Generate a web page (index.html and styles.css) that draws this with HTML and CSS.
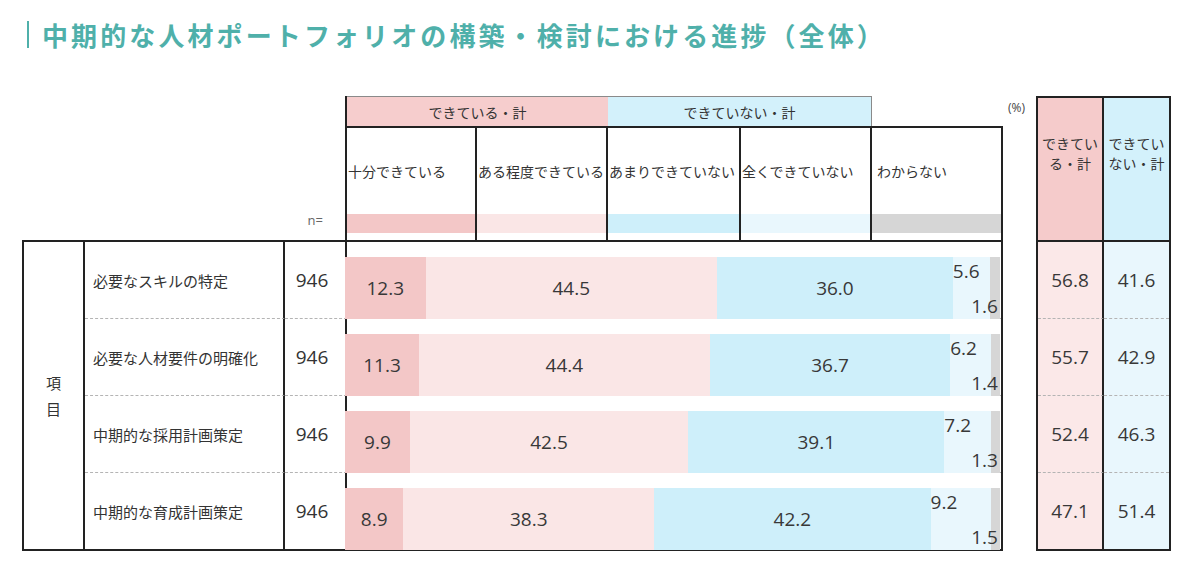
FILE: index.html
```html
<!DOCTYPE html>
<html lang="ja">
<head>
<meta charset="utf-8">
<title>中期的な人材ポートフォリオの構築・検討における進捗（全体）</title>
<link rel="stylesheet" href="styles.css">
</head>
<body>
<div class="page">
  <h1 class="title"><span class="title-bar"></span><span class="title-text">中期的な人材ポートフォリオの構築・検討における進捗（全体）</span></h1>
  <div class="chart">
    <div class="main">
      <div class="head">
        <div class="head-left"><span class="n-label">n=</span></div>
        <div class="head-box">
          <div class="bands">
            <div class="band band-pos">できている・計</div>
            <div class="band band-neg">できていない・計</div>
          </div>
          <div class="cols">
            <div class="col c1"><div class="col-text">十分できている</div><div class="strip k1"></div></div>
            <div class="col c2"><div class="col-text">ある程度できている</div><div class="strip k2"></div></div>
            <div class="col c3"><div class="col-text">あまりできていない</div><div class="strip k3"></div></div>
            <div class="col c4"><div class="col-text">全くできていない</div><div class="strip k4"></div></div>
            <div class="col c5"><div class="col-text col-text-last">わからない</div><div class="strip k5"></div></div>
          </div>
        </div>
      </div>
      <div class="body">
        <div class="item">項<br>目</div>

        <div class="label sep">必要なスキルの特定</div>
        <div class="n sep">946</div>
        <div class="bar-cell sep">
          <div class="bar">
            <div class="seg k1" style="width:12.3%">12.3</div>
            <div class="seg k2" style="width:44.5%">44.5</div>
            <div class="seg k3" style="width:36.0%">36.0</div>
            <div class="seg k4" style="width:5.6%"><span class="lbl-top">5.6</span></div>
            <div class="seg k5" style="width:1.6%"><span class="lbl-bot">1.6</span></div>
          </div>
        </div>

        <div class="label sep">必要な人材要件の明確化</div>
        <div class="n sep">946</div>
        <div class="bar-cell sep">
          <div class="bar">
            <div class="seg k1" style="width:11.3%">11.3</div>
            <div class="seg k2" style="width:44.4%">44.4</div>
            <div class="seg k3" style="width:36.7%">36.7</div>
            <div class="seg k4" style="width:6.2%"><span class="lbl-top">6.2</span></div>
            <div class="seg k5" style="width:1.4%"><span class="lbl-bot">1.4</span></div>
          </div>
        </div>

        <div class="label sep">中期的な採用計画策定</div>
        <div class="n sep">946</div>
        <div class="bar-cell sep">
          <div class="bar">
            <div class="seg k1" style="width:9.9%">9.9</div>
            <div class="seg k2" style="width:42.5%">42.5</div>
            <div class="seg k3" style="width:39.1%">39.1</div>
            <div class="seg k4" style="width:7.2%"><span class="lbl-top">7.2</span></div>
            <div class="seg k5" style="width:1.3%"><span class="lbl-bot">1.3</span></div>
          </div>
        </div>

        <div class="label">中期的な育成計画策定</div>
        <div class="n">946</div>
        <div class="bar-cell">
          <div class="bar">
            <div class="seg k1" style="width:8.9%">8.9</div>
            <div class="seg k2" style="width:38.3%">38.3</div>
            <div class="seg k3" style="width:42.2%">42.2</div>
            <div class="seg k4" style="width:9.2%"><span class="lbl-top">9.2</span></div>
            <div class="seg k5" style="width:1.4%"><span class="lbl-bot">1.5</span></div>
          </div>
        </div>
      </div>
    </div>

    <div class="gap"><span class="pct">(%)</span></div>

    <div class="side">
      <div class="side-head side-pos">できてい<br>る・計</div>
      <div class="side-head side-neg">できてい<br>ない・計</div>

      <div class="side-val val-pos sep">56.8</div>
      <div class="side-val val-neg sep">41.6</div>

      <div class="side-val val-pos sep">55.7</div>
      <div class="side-val val-neg sep">42.9</div>

      <div class="side-val val-pos sep">52.4</div>
      <div class="side-val val-neg sep">46.3</div>

      <div class="side-val val-pos">47.1</div>
      <div class="side-val val-neg">51.4</div>
    </div>
  </div>
</div>
</body>
</html>
```

FILE: styles.css
```css
* {
  box-sizing: border-box;
}

html,
body {
  margin: 0;
  padding: 0;
  background: #ffffff;
}

body {
  font-family: "Noto Sans CJK JP", "Noto Sans", sans-serif;
  color: #333333;
}

.page {
  width: 1200px;
  height: 573px;
  overflow: hidden;
}

/* Title */
.title {
  margin: 0;
  height: 96px;
  padding: 18px 0 0 27px;
  display: flex;
  align-items: flex-start;
  font-size: 26px;
  line-height: 34px;
  font-weight: 700;
  color: #4fb0aa;
  letter-spacing: 3.1px;
}

.title-bar {
  width: 2px;
  height: 27px;
  margin: 3px 13px 0 0;
  background: #4fb0aa;
}

/* Chart layout */
.chart {
  display: flex;
  padding-left: 22px;
}

.main {
  width: 981px;
}

.head {
  display: flex;
  height: 144px;
}

.head-left {
  width: 323px;
  display: flex;
  justify-content: flex-end;
  align-items: flex-end;
  padding: 0 22px 12px 0;
}

.n-label {
  font-family: "Open Sans", "Noto Sans", sans-serif;
  font-size: 13px;
  line-height: 16px;
  color: #666666;
}

.head-box {
  width: 658px;
  border-left: 2px solid #222222;
  display: flex;
  flex-direction: column;
}

.bands {
  display: flex;
  height: 30px;
}

.band {
  display: flex;
  align-items: center;
  justify-content: center;
  font-size: 14px;
  border-top: 1px solid #8a8a8a;
}

.band-pos {
  width: 261px;
  background: #f6cdcd;
}

.band-neg {
  width: 264px;
  background: #d3f1fb;
  border-right: 1px solid #8a8a8a;
}

.cols {
  flex: 1;
  display: flex;
  border-top: 2px solid #222222;
  border-right: 2px solid #222222;
}

.col {
  display: flex;
  flex-direction: column;
  border-right: 2px solid #222222;
}

.c1 { width: 130px; }
.c2 { width: 131px; }
.c3 { width: 133px; }
.c4 { width: 131px; }
.c5 { flex: 1; border-right: none; }

.col-text {
  flex: 1;
  display: flex;
  align-items: center;
  padding-left: 1px;
  font-size: 14px;
  white-space: nowrap;
}

.col-text-last {
  padding-left: 5px;
}

.strip {
  height: 19px;
  margin-bottom: 7px;
}

/* Colour keys */
.k1 { background: #f3c7c7; }
.k2 { background: #fae6e6; }
.k3 { background: #ceeffa; }
.k4 { background: #e9f7fd; }
.k5 { background: #d6d6d6; }

/* Body */
.body {
  display: grid;
  grid-template-columns: 61px 200px 62px 654px;
  grid-template-rows: 77px 77px 77px 76px;
  border: 2px solid #222222;
}

.item {
  grid-row: 1 / 5;
  border-right: 2px solid #222222;
  display: flex;
  align-items: center;
  justify-content: center;
  text-align: center;
  font-size: 15px;
  line-height: 26px;
}

.label {
  border-right: 2px solid #222222;
  display: flex;
  align-items: center;
  padding-left: 8px;
  font-size: 15px;
  white-space: nowrap;
}

.n {
  border-right: 2px solid #222222;
  display: flex;
  align-items: center;
  justify-content: center;
  padding-right: 6px;
  font-family: "Open Sans", "Noto Sans", sans-serif;
  font-size: 19px;
}

.sep {
  border-bottom: 1px dashed #b4b4b4;
}

.bar-cell {
  min-width: 0;
}

.bar {
  display: flex;
  height: 62px;
  margin: 15px 0 0 -2px;
  width: calc(100% + 1px);
}

.seg {
  flex: none;
  position: relative;
  display: flex;
  align-items: center;
  justify-content: center;
  font-family: "Open Sans", "Noto Sans", sans-serif;
  font-size: 19px;
  color: #383838;
  white-space: nowrap;
}

.lbl-top {
  position: absolute;
  top: 3px;
  left: 0;
  line-height: 22px;
}

.lbl-bot {
  position: absolute;
  right: 2px;
  bottom: 2px;
  line-height: 22px;
}

/* Gap with unit */
.gap {
  width: 33px;
  padding: 5px 0 0 5px;
  font-size: 12px;
  line-height: 14px;
}

.pct {
  display: block;
  font-family: "Open Sans", "Noto Sans", sans-serif;
  font-size: 12px;
  line-height: 14px;
  color: #444444;
}

/* Side totals */
.side {
  width: 135px;
  border: 2px solid #222222;
  display: grid;
  grid-template-columns: 66px 65px;
  grid-template-rows: 144px 77px 77px 77px 76px;
}

.side-head {
  border-bottom: 2px solid #222222;
  display: flex;
  align-items: center;
  justify-content: center;
  text-align: center;
  padding-bottom: 32px;
  font-size: 14px;
  line-height: 20px;
}

.side-pos {
  background: #f5cbcb;
  border-right: 2px solid #222222;
}

.side-neg {
  background: #d3f1fb;
}

.side-val {
  display: flex;
  align-items: center;
  justify-content: center;
  font-family: "Open Sans", "Noto Sans", sans-serif;
  font-size: 19px;
  color: #383838;
}

.val-pos {
  background: #fbe8e8;
  border-right: 2px solid #222222;
}

.val-neg {
  background: #e9f7fd;
}
```
